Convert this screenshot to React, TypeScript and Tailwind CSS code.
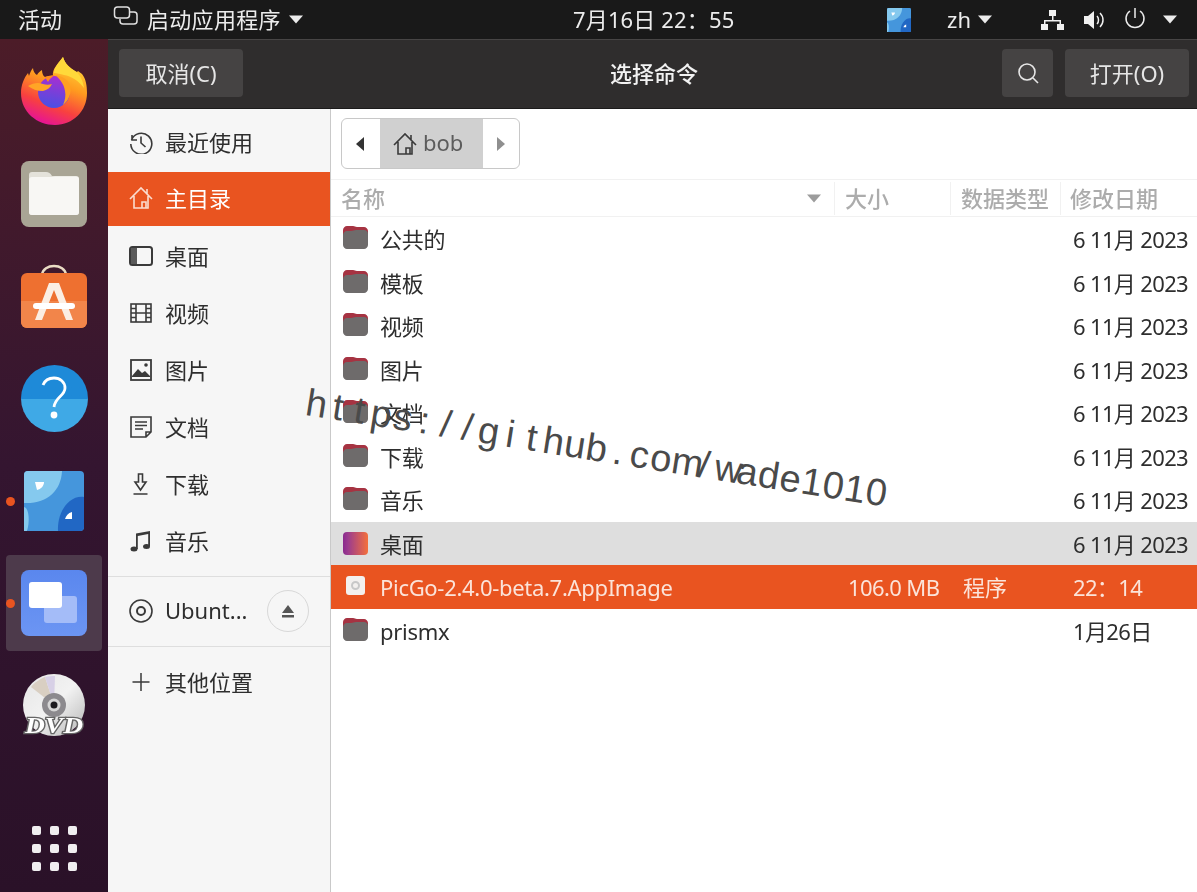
import { useId, type ReactNode } from "react"

const font = { fontFamily: '"Noto Sans", "Noto Sans CJK SC", sans-serif' }

function Caret({ className = "" }: { className?: string }) {
  return (
    <svg width="16" height="9" viewBox="0 0 16 9" className={className}>
      <path d="M1 0.5h14L8 8.5z" fill="currentColor" />
    </svg>
  )
}

function Firefox() {
  const id = useId()
  return (
    <svg width="70" height="72" viewBox="0 0 70 72">
      <defs>
        <linearGradient id={id + "a"} x1="0.75" y1="0" x2="0.35" y2="1">
          <stop offset="0" stopColor="#ffdf3c" />
          <stop offset="0.4" stopColor="#ff9a1f" />
          <stop offset="0.72" stopColor="#f8413f" />
          <stop offset="1" stopColor="#e5119a" />
        </linearGradient>
        <linearGradient id={id + "b"} x1="0.6" y1="0" x2="0.4" y2="1">
          <stop offset="0" stopColor="#a92ed0" />
          <stop offset="1" stopColor="#4a50e2" />
        </linearGradient>
      </defs>
      <path
        d="M44 2c2 7 7 11 12 14l2 1 1-1 4 3c4 5 5 12 5 19 0 18-14 32-32 32S2 57 2 38c0-8 3-15 7-20l1 3c1-3 2-6 4-8 0 3 2 6 4 7 1-2 3-4 5-5 0 3 1 6 3 7 3-1 5-1 8-1-1-7 4-11 10-19z"
        fill={`url(#${id}a)`}
      />
      <path d="M44 2c2 7 7 11 12 14 5 3 8 10 9 17-5-7-13-12-20-13-4-1-7-2-10-2 0-6 5-10 9-16z" fill="#ffd93a" />
      <circle cx="35" cy="37" r="16" fill={`url(#${id}b)`} />
      <path d="M36 20c7 1 12 4 15 10 2 8-1 15-7 20 2-5 3-9 2-14-1-7-5-12-10-16z" fill="#ff9f22" />
      <path d="M9 31c5-3 10-4 15-2 3 1 6 1 9 0-2 4-5 6-9 7-6 0-11-2-15-5z" fill="#ffa526" />
      <path d="M26 22c3-1 6-2 10-2-3 2-6 4-7 7z" fill="#ff8a20" />
    </svg>
  )
}

function FilesIcon() {
  return (
    <div className="flex h-[66px] w-[66px] items-center justify-center rounded-lg bg-[#a9a595]">
      <svg width="50" height="44" viewBox="0 0 50 44">
        <path d="M3 0h14c3 0 4 1 6 4h24c2 0 3 1 3 3v33c0 2-1 3-3 3H3c-2 0-3-1-3-3V3c0-2 1-3 3-3z" fill="#e4e2da" />
        <path d="M3 5h20l3-0.500h21c2 0 3 1 3 3V40c0 2-1 3-3 3H3c-2 0-3-1-3-3V8c0-2 1-3 3-3z" fill="#f8f7f4" />
      </svg>
    </div>
  )
}

function StoreIcon() {
  return (
    <svg width="68" height="66" viewBox="0 0 68 66">
      <path d="M22 12c1-12 23-12 24 0" fill="none" stroke="#eadcc4" strokeWidth="2.500" />
      <rect x="1" y="10" width="66" height="55" rx="6" fill="#ee7030" />
      <path d="M1 38h66v21a6 6 0 0 1-6 6H7a6 6 0 0 1-6-6z" fill="#f2854a" />
      <path d="M29 20h10l14 37h-7L34 27 22 57h-7z" fill="#fbeee3" />
      <rect x="13" y="40" width="42" height="6" rx="3" fill="#fff" />
    </svg>
  )
}

function HelpIcon() {
  return (
    <div className="flex h-[67px] w-[67px] items-center justify-center rounded-full bg-gradient-to-b from-[#1e8ad8] from-50% to-[#3fa9e6] to-50%">
      <svg width="30" height="44" viewBox="0 0 30 44">
        <path d="M4 9c2-5 6-7 11-7 6 0 11 4 11 10 0 8-10 9-11 19" fill="none" stroke="#fff" strokeWidth="2.800" />
        <circle cx="15" cy="39" r="3.400" fill="#fff" />
      </svg>
    </div>
  )
}

function WallpaperIcon({ size, rounded = 4 }: { size: number; rounded?: number }) {
  return (
    <svg width={size} height={size} viewBox="0 0 60 60">
      <rect width="60" height="60" rx={rounded} fill="#4596dc" />
      <path d="M0 4a4 4 0 0 1 4-4h34c-1 20-15 33-38 32z" fill="#85c9ee" />
      <path d="M60 26c-15-2-27 15-26 34h22a4 4 0 0 0 4-4z" fill="#2167c4" />
      <path d="M0 36c5 1 6 14 3 24H0z" fill="#85c9ee" />
      <path d="M11 11h9c0 4-3 7-7 8z" fill="#fff" />
      <path d="M41 48c1-3 3-6 7-7v7z" fill="#fff" />
    </svg>
  )
}

function WindowsIcon() {
  return (
    <div className="flex h-[66px] w-[66px] items-center justify-center rounded-lg bg-gradient-to-b from-[#5a87ee] to-[#6c95f3]">
      <svg width="50" height="42" viewBox="0 0 50 42">
        <rect x="15" y="14" width="33" height="27" rx="3" fill="#a4bcf8" />
        <rect x="0" y="0" width="33" height="26" rx="3" fill="#fff" />
      </svg>
    </div>
  )
}

function DvdIcon() {
  const id = useId()
  return (
    <svg width="66" height="66" viewBox="0 0 66 66">
      <defs>
        <linearGradient id={id} x1="0" y1="0" x2="1" y2="1">
          <stop offset="0" stopColor="#e6e6e6" />
          <stop offset="0.5" stopColor="#f2f2f2" />
          <stop offset="1" stopColor="#b5b5b5" />
        </linearGradient>
      </defs>
      <circle cx="33" cy="32" r="31" fill={`url(#${id})`} />
      <path d="M33 32L10 14c3-4 9-8 14-10z" fill="#d9cfc2" />
      <path d="M33 32L24 4c3-1 7-1 10-1z" fill="#d7d0e6" />
      <circle cx="33" cy="32" r="12" fill="#8c8a8e" />
      <circle cx="33" cy="32" r="6.500" fill="#d6d6d6" />
      <circle cx="33" cy="32" r="3.500" fill="#1c1a1e" />
      <text
        x="33"
        y="60"
        textAnchor="middle"
        textLength="58"
        lengthAdjust="spacingAndGlyphs"
        fontFamily="Liberation Serif, serif"
        fontWeight="700"
        fontStyle="italic"
        fontSize="24"
        fill="#ffffff"
        stroke="#666666"
        strokeWidth="2.600"
        paintOrder="stroke"
      >
        DVD
      </text>
    </svg>
  )
}

function DockSlot({ children, dot, active }: { children: ReactNode; dot?: boolean; active?: boolean }) {
  return (
    <div className="relative flex h-[102.4px] w-full items-center justify-center">
      {active && <div className="absolute inset-x-[6px] top-[3px] h-[96px] rounded bg-[#4d3a4b]" />}
      {dot && <div className="absolute left-[6px] top-[47px] h-[9px] w-[9px] rounded-full bg-[#e95420]" />}
      <div className="relative">{children}</div>
    </div>
  )
}

function Dock() {
  return (
    <aside className="flex w-[108px] shrink-0 flex-col bg-gradient-to-b from-[#4c1c28] via-[#341530] to-[#2a1128] pt-px">
      <DockSlot><Firefox /></DockSlot>
      <DockSlot><FilesIcon /></DockSlot>
      <DockSlot><StoreIcon /></DockSlot>
      <DockSlot><HelpIcon /></DockSlot>
      <DockSlot dot><WallpaperIcon size={60} /></DockSlot>
      <DockSlot dot active><WindowsIcon /></DockSlot>
      <DockSlot><DvdIcon /></DockSlot>
      <div className="mt-auto mb-[21px] grid grid-cols-3 gap-[9px] self-center">
        {Array.from({ length: 9 }).map((_, i) => (
          <div key={i} className="h-[9px] w-[9px] rounded-[2px] bg-[#f0eef0]" />
        ))}
      </div>
    </aside>
  )
}

function TopBar() {
  return (
    <header className="relative flex h-[39px] shrink-0 items-center bg-[#191919] text-[22px] text-[#ececec]">
      <span className="ml-[18px]">活动</span>
      <svg width="26" height="24" viewBox="0 0 26 24" fill="none" stroke="#e0e0e0" strokeWidth="1.500" className="ml-[51px] -mt-[6px]">
        <rect x="1.500" y="2" width="15" height="11" rx="3" />
        <path d="M17 7h4a3 3 0 0 1 3 3v6a3 3 0 0 1-3 3H10a3 3 0 0 1-3-3v-2" />
      </svg>
      <span className="ml-[8px] tracking-[0.3px]">启动应用程序</span>
      <Caret className="ml-[7px]" />
      <span className="absolute left-[573px] whitespace-nowrap tracking-[0.15px]">7月16日 22：55</span>
      <div className="ml-auto flex items-center">
        <WallpaperIcon size={24} rounded={3} />
        <span className="ml-[36px]">zh</span>
        <Caret className="ml-[6px]" />
        <svg width="23" height="20" viewBox="0 0 23 20" fill="#f0f0f0" className="ml-[48px]">
          <rect x="8" y="0" width="7" height="6" />
          <rect x="0" y="14" width="7" height="6" />
          <rect x="16" y="14" width="7" height="6" />
          <path d="M11 6h1.500v4H20v4h-1.500v-2.500h-14V14H3v-4h8z" />
        </svg>
        <svg width="23" height="20" viewBox="0 0 23 20" className="ml-[20px]" fill="none">
          <path d="M0 6h4l6-5v18l-6-5H0z" fill="#f0f0f0" />
          <path d="M13 6c2 2 2 6 0 8M16 3c4 4 4 10 0 14" stroke="#f0f0f0" strokeWidth="1.500" />
        </svg>
        <svg width="22" height="22" viewBox="0 0 22 22" fill="none" stroke="#ececec" strokeWidth="1.500" className="ml-[17px] -mt-[4px]">
          <path d="M6 4a9 9 0 1 0 10 0M11 1v10" />
        </svg>
        <Caret className="ml-[16px] mr-[19px]" />
      </div>
    </header>
  )
}

function HeadButton({ children, width }: { children: ReactNode; width: string }) {
  return (
    <button className={`flex h-[48px] items-center justify-center rounded bg-[#454343] text-[22px] text-[#e6e6e6] ${width}`}>
      {children}
    </button>
  )
}

function DialogHeader() {
  return (
    <div className="grid h-[70px] shrink-0 grid-cols-[1fr_auto_1fr] items-center border-t border-b border-t-[#474545] border-b-[#1c1b1b] bg-[#2f2d2d] pb-[2px] pl-[11px] pr-[8px]">
      <HeadButton width="w-[124px]">取消(C)</HeadButton>
      <span className="text-[22px] font-medium text-[#f2f2f2]">选择命令</span>
      <div className="flex justify-end gap-[12px]">
        <HeadButton width="w-[51px]">
          <svg width="24" height="24" viewBox="0 0 24 24" fill="none" stroke="#e6e6e6" strokeWidth="1.600">
            <circle cx="11" cy="11" r="8" />
            <path d="M17 17l5 5" />
          </svg>
        </HeadButton>
        <HeadButton width="w-[124px]">打开(O)</HeadButton>
      </div>
    </div>
  )
}

const stroke = { fill: "none", stroke: "#3a3a3a", strokeWidth: 1.600 }

function HomeGlyph({ color = "#3a3a3a" }: { color?: string }) {
  return (
    <svg width="24" height="24" viewBox="0 0 24 24" fill="none" stroke={color} strokeWidth="1.600">
      <path d="M1 13L12 2l11 11M5 10v12h14V10M13 22v-6h4v6M18 3v5" />
    </svg>
  )
}

const placeIcons: Record<string, ReactNode> = {
  recent: (
    <svg width="24" height="24" viewBox="0 0 24 24" {...stroke}>
      <path d="M3 5v5h5M2.500 10A10.500 10.500 0 1 1 1.800 14M12 6.500V13l4.500 4" />
    </svg>
  ),
  desktop: (
    <svg width="24" height="24" viewBox="0 0 24 24">
      <rect x="1" y="3" width="22" height="18" rx="2.500" fill="none" stroke="#3a3a3a" strokeWidth="2" />
      <path d="M2 4h6v16H2z" fill="#5a5a5a" />
    </svg>
  ),
  videos: (
    <svg width="24" height="24" viewBox="0 0 24 24" {...stroke}>
      <rect x="2" y="3" width="20" height="18" />
      <path d="M7 3v18M17 3v18M2 7.500h5M2 12h5M2 16.500h5M17 7.500h5M17 12h5M17 16.500h5M7 12h10" />
    </svg>
  ),
  pictures: (
    <svg width="24" height="24" viewBox="0 0 24 24">
      <rect x="2" y="2" width="20" height="20" fill="none" stroke="#3a3a3a" strokeWidth="1.800" />
      <path d="M3 18l6-7 4 4 3-2 5 5v1H3z" fill="#3a3a3a" />
      <circle cx="17" cy="7" r="1.800" fill="#3a3a3a" />
    </svg>
  ),
  documents: (
    <svg width="24" height="24" viewBox="0 0 24 24" {...stroke}>
      <path d="M2 2h20v15l-5 5H2zM22 17h-5v5M6 7h12M6 10.500h12M6 14h8" />
    </svg>
  ),
  downloads: (
    <svg width="24" height="24" viewBox="0 0 24 24" {...stroke}>
      <path d="M9.500 2h4v8H17l-5.500 8L6 10h3.500zM4.500 22h14" />
    </svg>
  ),
  music: (
    <svg width="24" height="24" viewBox="0 0 24 24">
      <path d="M7 4.500l14-2.500v15h-1.800V5L8.800 7v13H7z" fill="#3a3a3a" />
      <ellipse cx="5" cy="20" rx="3.500" ry="2.500" fill="#3a3a3a" />
      <ellipse cx="17.500" cy="17.500" rx="3.500" ry="2.500" fill="#3a3a3a" />
    </svg>
  ),
}

function PlaceRow({ icon, label, active, top }: { icon: ReactNode; label: string; active?: boolean; top: string }) {
  return (
    <div className={`flex h-[54px] items-center pb-[2px] pl-[21px] text-[22px] ${top} ${active ? "bg-[#e95420] text-white" : "text-[#2e2e2e]"}`}>
      <span className="flex w-[24px] justify-center">{icon}</span>
      <span className="ml-[12px]">{label}</span>
    </div>
  )
}

function Sidebar() {
  return (
    <nav className="flex w-[223px] shrink-0 flex-col border-r border-[#c9c9c9] bg-[#f6f6f6] pt-[7px]">
      <PlaceRow top="" icon={placeIcons.recent} label="最近使用" />
      <PlaceRow top="mt-[2px]" active icon={<HomeGlyph color="#fbdccf" />} label="主目录" />
      <PlaceRow top="mt-[4px]" icon={placeIcons.desktop} label="桌面" />
      <PlaceRow top="mt-[3px]" icon={placeIcons.videos} label="视频" />
      <PlaceRow top="mt-[3px]" icon={placeIcons.pictures} label="图片" />
      <PlaceRow top="mt-[3px]" icon={placeIcons.documents} label="文档" />
      <PlaceRow top="mt-[3px]" icon={placeIcons.downloads} label="下载" />
      <PlaceRow top="mt-[3px]" icon={placeIcons.music} label="音乐" />
      <div className="mt-[7px] border-t border-[#dedede]" />
      <div className="flex h-[69px] items-center pb-[2px] pl-[21px] text-[#2e2e2e]">
        <svg width="24" height="24" viewBox="0 0 24 24" fill="none" stroke="#3a3a3a" strokeWidth="1.600">
          <circle cx="12" cy="12" r="11" />
          <circle cx="12" cy="12" r="4" strokeWidth="2" />
        </svg>
        <span className="ml-[12px] w-[90px] text-[22px]">Ubunt...</span>
        <div className="ml-[12px] flex h-[42px] w-[42px] items-center justify-center rounded-full border border-[#d8d8d8]">
          <svg width="14" height="14" viewBox="0 0 14 14" fill="#555">
            <path d="M7 1l6 8H1zM1 11h12v2.500H1z" />
          </svg>
        </div>
      </div>
      <div className="border-t border-[#dedede]" />
      <div className="flex h-[72px] items-center pb-[2px] pl-[21px] text-[22px] text-[#2e2e2e]">
        <svg width="24" height="24" viewBox="0 0 24 24" fill="none" stroke="#3a3a3a" strokeWidth="1.500">
          <path d="M12 3v18M3.500 12h17" />
        </svg>
        <span className="ml-[12px]">其他位置</span>
      </div>
    </nav>
  )
}

function PathBar() {
  return (
    <div className="flex h-[70px] shrink-0 items-start pl-[10px] pt-[9px]">
      <div className="flex h-[51px] w-[179px] overflow-hidden rounded-md border border-[#c8c8c8] text-[22px] text-[#5c5c5c]">
        <div className="flex w-[38px] items-center justify-center pr-[3px]">
          <svg width="8" height="14" viewBox="0 0 8 14"><path d="M8 0v14L0 7z" fill="#333" /></svg>
        </div>
        <div className="flex w-[103px] items-center gap-[6px] bg-[#d0d0d0] pl-[13px]">
          <HomeGlyph />
          <span className="-mt-[2px]">bob</span>
        </div>
        <div className="flex flex-1 items-center justify-center">
          <svg width="8" height="14" viewBox="0 0 8 14"><path d="M0 0v14l8-7z" fill="#8f8f8f" /></svg>
        </div>
      </div>
    </div>
  )
}

function Folder({ desktop }: { desktop?: boolean }) {
  const id = useId()
  if (desktop) {
    return (
      <svg width="25" height="25" viewBox="0 0 25 25" className="-translate-y-[1px]">
        <defs>
          <linearGradient id={id}>
            <stop offset="0" stopColor="#8a2a8e" />
            <stop offset="0.2" stopColor="#9c3c8e" />
            <stop offset="1" stopColor="#f4703c" />
          </linearGradient>
        </defs>
        <rect y="1" width="25" height="23" rx="4" fill={`url(#${id})`} />
      </svg>
    )
  }
  return (
    <svg width="25" height="25" viewBox="0 0 25 25" className="-translate-y-[2px]">
      <path d="M4 1h6c2 0 2 1 4 1h7c2 0 4 2 4 4v6H0V5c0-2 2-4 4-4z" fill="#a63342" />
      <path d="M4 6h4c2 0 3-1 5-1h8c2 0 4 1 4 4v11c0 2-2 4-4 4H4c-2 0-4-2-4-4V10c0-2 2-4 4-4z" fill="#6e6b6b" />
    </svg>
  )
}

type FileRow = { name: string; size?: string; type?: string; date: string; state?: "hover" | "selected"; file?: boolean; desktop?: boolean }

const rows: FileRow[] = [
  { name: "公共的", date: "6 11月 2023" },
  { name: "模板", date: "6 11月 2023" },
  { name: "视频", date: "6 11月 2023" },
  { name: "图片", date: "6 11月 2023" },
  { name: "文档", date: "6 11月 2023" },
  { name: "下载", date: "6 11月 2023" },
  { name: "音乐", date: "6 11月 2023" },
  { name: "桌面", date: "6 11月 2023", state: "hover", desktop: true },
  { name: "PicGo-2.4.0-beta.7.AppImage", size: "106.0 MB", type: "程序", date: "22：14", state: "selected", file: true },
  { name: "prismx", date: "1月26日" },
]

function FileList() {
  return (
    <div className="flex-1">
      <div className="grid h-[38px] grid-cols-[503px_116px_110px_1fr] items-center border-y border-[#f1f1f1] text-[22px] font-medium text-[#acacac]">
        <div className="flex items-center justify-between pl-[10px] pr-[12px]">
          <span>名称</span>
          <Caret className="text-[#9c9c9c]" />
        </div>
        <div className="border-l border-[#f1f1f1] pl-[10px]">大小</div>
        <div className="border-l border-[#f1f1f1] pl-[10px]">数据类型</div>
        <div className="border-l border-[#f1f1f1] pl-[9px]">修改日期</div>
      </div>
      {rows.map((r) => (
        <div
          key={r.name + r.date}
          className={`grid h-[43.500px] grid-cols-[503px_116px_110px_1fr] items-center pt-[2px] text-[22px] ${
            r.state === "selected" ? "bg-[#e95420] text-[#fbe3d9]" : r.state === "hover" ? "bg-[#dedede] text-[#2e2e2e]" : "text-[#2e2e2e]"
          }`}
        >
          <div className="flex items-center pl-[12px]">
            {r.file ? (
              <div className="mx-[3px] flex h-[19px] w-[19px] -translate-y-[2px] items-center justify-center rounded-[3px] bg-[#f3f0ee]">
                <div className="h-[9px] w-[9px] rounded-full border-2 border-[#c8c8c8]" />
              </div>
            ) : (
              <Folder desktop={r.desktop} />
            )}
            <span className="ml-[12px] tracking-[-0.3px]">{r.name}</span>
          </div>
          <div className="pl-[14px] tracking-[-0.6px]">{r.size}</div>
          <div className="pl-[13px]">{r.type}</div>
          <div className="whitespace-nowrap pl-[13px] tracking-[-0.65px]">{r.date}</div>
        </div>
      ))}
    </div>
  )
}

// the watermark is Arial-like glyphs on a fixed pitch, so each character gets its own cell
function Watermark() {
  return (
    <div className="pointer-events-none absolute left-[309px] top-[383px] flex origin-top-left rotate-[9deg] font-['Liberation_Sans',sans-serif] text-[38px] leading-none text-[#4a4a4a]">
      {"https://github.com/wade1010".split("").map((c, i) => (
        <span key={i} className="w-[21.8px] shrink-0 text-center">{c}</span>
      ))}
    </div>
  )
}

export default function App() {
  return (
    <div className="relative h-[892px] w-[1197px] overflow-hidden" style={font}>
      <div className="flex h-full flex-col blur-[0.4px]">
        <TopBar />
        <div className="flex min-h-0 flex-1">
          <Dock />
          <div className="flex min-w-0 flex-1 flex-col bg-white">
            <DialogHeader />
            <div className="flex min-h-0 flex-1">
              <Sidebar />
              <main className="flex min-w-0 flex-1 flex-col">
                <PathBar />
                <FileList />
              </main>
            </div>
          </div>
        </div>
      </div>
      <Watermark />
    </div>
  )
}
